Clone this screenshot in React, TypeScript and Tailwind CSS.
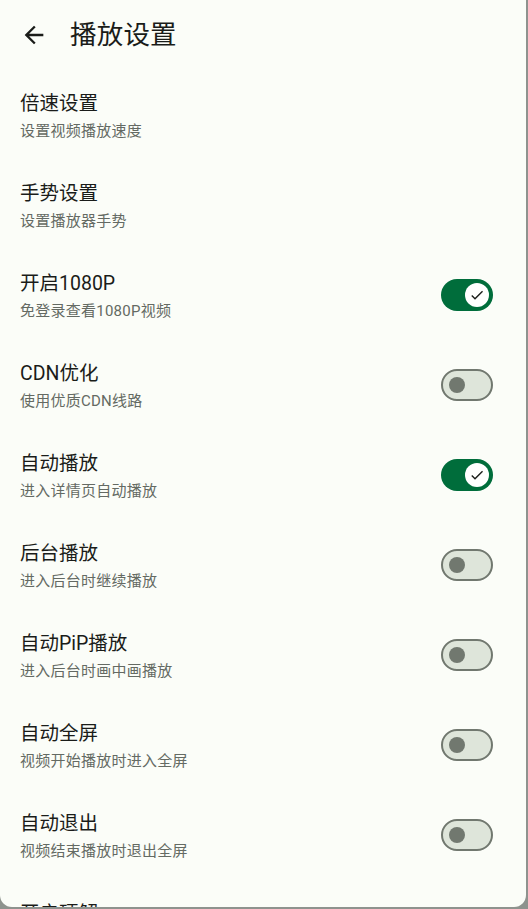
import { useState } from "react";

type Item = { title: string; desc: string; toggle?: boolean; on?: boolean };

const ITEMS: Item[] = [
  { title: "倍速设置", desc: "设置视频播放速度" },
  { title: "手势设置", desc: "设置播放器手势" },
  { title: "开启1080P", desc: "免登录查看1080P视频", toggle: true, on: true },
  { title: "CDN优化", desc: "使用优质CDN线路", toggle: true },
  { title: "自动播放", desc: "进入详情页自动播放", toggle: true, on: true },
  { title: "后台播放", desc: "进入后台时继续播放", toggle: true },
  { title: "自动PiP播放", desc: "进入后台时画中画播放", toggle: true },
  { title: "自动全屏", desc: "视频开始播放时进入全屏", toggle: true },
  { title: "自动退出", desc: "视频结束播放时退出全屏", toggle: true },
  { title: "开启硬解", desc: "使用硬件解码播放视频", toggle: true },
];

export default function App() {
  return (
    <div
      className="h-[909px] w-[528px] overflow-hidden bg-[#8e938e]"
      style={{ fontFamily: 'Roboto, "Noto Sans CJK SC", sans-serif' }}
    >
      <div className="h-[907px] w-[526px] overflow-hidden rounded-b-[12px] bg-[#fbfdf8]">
        <header className="h-[70px] flex items-center">
          <button aria-label="返回" className="ml-[20px] w-[28px] h-[28px] flex items-center justify-center text-[#1a1c19]">
            <svg viewBox="0 0 24 24" className="w-[28px] h-[28px]" fill="currentColor">
              <path d="M20 11H7.83l5.59-5.59L12 4l-8 8 8 8 1.41-1.41L7.83 13H20v-2z" />
            </svg>
          </button>
          <h1 className="ml-[22px] text-[26.5px] tracking-[0.2px] text-[#1a1c19] leading-none">播放设置</h1>
        </header>
        <main className="flex flex-col">
          {ITEMS.map((it) => (
            <Row key={it.title} item={it} />
          ))}
        </main>
      </div>
    </div>
  );
}

function Row({ item }: { item: Item }) {
  const [on, setOn] = useState(!!item.on);
  return (
    <div className="h-[90px] shrink-0 flex items-center justify-between pl-[20px] pr-[33px]">
      <div className="flex flex-col pt-[3px]">
        <div className="text-[19.5px] leading-[29px] text-[#1a1c19]">{item.title}</div>
        <div className="text-[15px] leading-[27px] tracking-[0.25px] text-[#646a63]">{item.desc}</div>
      </div>
      {item.toggle && (
        <button
          onClick={() => setOn(!on)}
          className={`w-[52px] h-[32px] rounded-full flex items-center shrink-0 ${
            on ? "bg-[#006d3b] justify-end pr-[4px]" : "bg-[#dee5da] border-2 border-[#71786f] pl-[6px]"
          }`}
        >
          {on ? (
            <span className="w-[24px] h-[24px] rounded-full bg-white flex items-center justify-center">
              <svg viewBox="0 0 24 24" className="w-[16px] h-[16px]" fill="#1a1c19">
                <path d="M9 16.17 4.83 12l-1.42 1.41L9 19 21 7l-1.41-1.41z" />
              </svg>
            </span>
          ) : (
            <span className="w-[16px] h-[16px] rounded-full bg-[#71786f]" />
          )}
        </button>
      )}
    </div>
  );
}
